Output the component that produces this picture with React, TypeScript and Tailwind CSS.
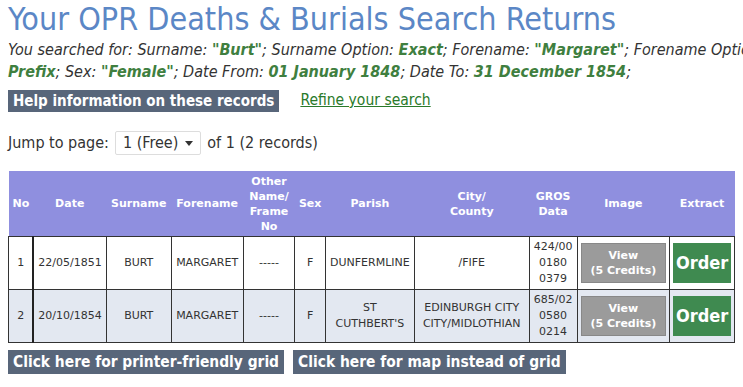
const cond = '[font-family:"DejaVu_Sans_Condensed","DejaVu_Sans",sans-serif]';
const wide = '[font-family:"DejaVu_Sans",Verdana,sans-serif]';

type Row = {
  no: number;
  date: string;
  surname: string;
  forename: string;
  other: string;
  sex: string;
  parish: string[];
  city: string[];
  gros: string[];
};

const rows: Row[] = [
  {
    no: 1,
    date: '22/05/1851',
    surname: 'BURT',
    forename: 'MARGARET',
    other: '-----',
    sex: 'F',
    parish: ['DUNFERMLINE'],
    city: ['/FIFE'],
    gros: ['424/00', '0180', '0379'],
  },
  {
    no: 2,
    date: '20/10/1854',
    surname: 'BURT',
    forename: 'MARGARET',
    other: '-----',
    sex: 'F',
    parish: ['ST', "CUTHBERT'S"],
    city: ['EDINBURGH CITY', 'CITY/MIDLOTHIAN'],
    gros: ['685/02', '0580', '0214'],
  },
];

function Val({ children }: { children: React.ReactNode }) {
  return <b className="text-[#3f7f3f]">{children}</b>;
}

export default function App() {
  const th = 'px-1 font-bold text-white text-center border-0';
  const td = 'border border-[#333] px-1 text-center text-[11px] text-[#333]';
  return (
    <div className={`w-[743px] h-[387px] overflow-hidden bg-white ${cond} text-[#333]`}>
      <div className="pl-2">
        <h1 className="text-[32px] leading-[38px] text-[#5b87c6] whitespace-nowrap">
          Your OPR Deaths &amp; Burials Search Returns
        </h1>
        <p className="mt-[1px] text-[16px] leading-[22px] italic whitespace-nowrap">
          You searched for: Surname: <Val>"Burt"</Val>; Surname Option: <Val>Exact</Val>; Forename:{' '}
          <Val>"Margaret"</Val>; Forename Option:
          <br />
          <Val>Prefix</Val>; Sex: <Val>"Female"</Val>; Date From: <Val>01 January 1848</Val>; Date To:{' '}
          <Val>31 December 1854</Val>;
        </p>
      </div>
      <div className="pl-2 flex items-center gap-[21px] mt-[6px]">
        <span className="bg-[#58667a] text-white font-bold text-[15px] leading-[22px] px-[5px]">
          Help information on these records
        </span>
        <a className="text-[#2a7a2a] underline text-[15.5px]" href="#">
          Refine your search
        </a>
      </div>
      <div className="pl-2 mt-[19px] flex items-center gap-[6px] text-[16px]">
        <span>Jump to page:</span>
        <span className="border border-[#ddd] rounded-[2px] h-[24px] px-[7px] flex items-center gap-[7px]">
          1 (Free)
          <svg width="8" height="5" viewBox="0 0 8 5">
            <path d="M0 0h8L4 5z" fill="#333" />
          </svg>
        </span>
        <span>of 1 (2 records)</span>
      </div>
      <table className={`ml-2 mt-[16px] w-[727px] border-collapse text-[11px] ${wide}`}>
        <thead>
          <tr className="bg-[#8f8fdf] h-[65px] leading-[15px]">
            <th className={`${th} w-[24px]`}>No</th>
            <th className={`${th} w-[73px]`}>Date</th>
            <th className={`${th} w-[65px]`}>Surname</th>
            <th className={`${th} w-[72px]`}>Forename</th>
            <th className={`${th} w-[52px]`}>
              Other
              <br />
              Name/
              <br />
              Frame
              <br />
              No
            </th>
            <th className={`${th} w-[30px]`}>Sex</th>
            <th className={`${th} w-[89px]`}>Parish</th>
            <th className={`${th} w-[115px]`}>
              City/
              <br />
              County
            </th>
            <th className={`${th} w-[48px]`}>
              GROS
              <br />
              Data
            </th>
            <th className={`${th} w-[94px]`}>Image</th>
            <th className={`${th} w-[65px]`}>Extract</th>
          </tr>
        </thead>
        <tbody>
          {rows.map((r) => (
            <tr key={r.no} className={`h-[53px] leading-[16px] ${r.no % 2 === 0 ? 'bg-[#e3e8f1]' : 'bg-white'}`}>
              <td className={`${td} border-r-2 border-r-[#222]`}>{r.no}</td>
              <td className={td}>{r.date}</td>
              <td className={td}>{r.surname}</td>
              <td className={td}>{r.forename}</td>
              <td className={td}>{r.other}</td>
              <td className={td}>{r.sex}</td>
              <td className={td}>
                {r.parish.map((p) => (
                  <div key={p}>{p}</div>
                ))}
              </td>
              <td className={td}>
                {r.city.map((p) => (
                  <div key={p}>{p}</div>
                ))}
              </td>
              <td className={`${td} px-0`}>
                {r.gros.map((p) => (
                  <div key={p}>{p}</div>
                ))}
              </td>
              <td className={`${td} px-[3px]`}>
                <div className="bg-[#9b9b9b] border border-[#888] text-white font-bold text-[11px] leading-[15px] h-[40px] flex flex-col items-center justify-center">
                  <span>View</span>
                  <span>(5 Credits)</span>
                </div>
              </td>
              <td className={`${td} px-[3px]`}>
                <div className={`bg-[#3f8a50] text-white font-bold text-[18px] h-[40px] flex items-center justify-center ${cond}`}>
                  Order
                </div>
              </td>
            </tr>
          ))}
        </tbody>
      </table>
      <div className="pl-2 mt-[7px] flex gap-[9px]">
        <span className="bg-[#58667a] text-white font-bold text-[15.4px] leading-[24px] px-[5px]">
          Click here for printer-friendly grid
        </span>
        <span className="bg-[#58667a] text-white font-bold text-[15.4px] leading-[24px] px-[5px]">
          Click here for map instead of grid
        </span>
      </div>
    </div>
  );
}
